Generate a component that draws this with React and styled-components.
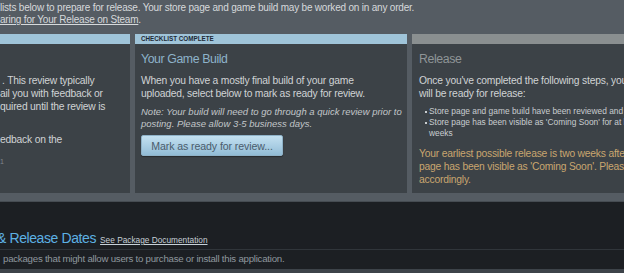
import styled, { createGlobalStyle } from 'styled-components';

const GlobalStyle = createGlobalStyle`
  html, body {
    margin: 0;
    padding: 0;
    background: #1c1f23;
    overflow: hidden;
  }
  body {
    font-family: 'Liberation Sans', Arial, sans-serif;
  }
`;

const Page = styled.div`
  width: 624px;
  height: 273px;
  overflow: hidden;
  display: flex;
  flex-direction: column;
`;

const Upper = styled.section`
  background: #555c63;
  padding: 2px 0 8px;
  border-bottom: 1px solid #464c52;
`;

const Intro = styled.p`
  margin: 0 0 8px;
  color: #d6d9db;
  font-size: 10px;
  letter-spacing: -0.2px;
  line-height: 12px;
  white-space: nowrap;

  a {
    color: #d6d9db;
    text-decoration: underline;
  }
`;

const Columns = styled.div`
  display: grid;
  grid-template-columns: 130px 272px 1fr;
  column-gap: 5px;
  margin-right: -40px;
`;

const Panel = styled.div`
  background: #3c4247;
  height: 159px;
  display: flex;
  flex-direction: column;
`;

const PanelHeader = styled.div`
  height: 10px;
  background: ${(p) => (p.$done ? '#9fc4d9' : '#8a8f90')};
  color: #1d2a36;
  font-size: 6.3px;
  font-weight: bold;
  line-height: 10px;
  padding-left: 6px;
  text-transform: uppercase;
`;

const PanelBody = styled.div`
  padding: 8px 7px 0 ${(p) => p.$left ?? 6}px;
  display: flex;
  flex-direction: column;
`;

const PanelTitle = styled.h3`
  margin: 0 0 8px;
  font-weight: normal;
  font-size: 12.3px;
  letter-spacing: -0.4px;
  line-height: 14px;
  color: ${(p) => (p.$muted ? '#8f9597' : '#8eb3ca')};
`;

const BodyText = styled.p`
  margin: 0 0 6px;
  color: ${(p) => (p.$warn ? '#c9a66f' : '#d0d3d5')};
  font-size: 10.3px;
  letter-spacing: -0.2px;
  line-height: 13px;
  white-space: nowrap;
`;

const Note = styled.p`
  margin: 0 0 6px;
  color: #c2c6c9;
  font-size: 9.5px;
  line-height: 11.6px;
  font-style: italic;
  white-space: nowrap;
`;

const Bullets = styled.ul`
  margin: 0 0 7px;
  padding: 0 0 0 6px;
  list-style: none;
  white-space: nowrap;

  li {
    position: relative;
    color: #c9cdd0;
    font-size: 8.4px;
    line-height: 11.2px;
    padding-left: 4px;
  }
  li::before {
    content: '';
    position: absolute;
    left: 0;
    top: 5px;
    width: 2px;
    height: 2px;
    background: #c9cdd0;
  }
`;

const FragLine = styled.div`
  color: #d0d3d5;
  font-size: 10.3px;
  letter-spacing: -0.2px;
  line-height: 13px;
  height: 13px;
  white-space: nowrap;
  padding-left: ${(p) => p.$indent ?? 0}px;
`;

const FragGap = styled.div`
  height: ${(p) => p.$h}px;
`;

const Tiny = styled.div`
  color: #80878c;
  font-size: 7px;
  line-height: 8px;
  margin-top: 12px;
`;

const Button = styled.button`
  align-self: flex-start;
  width: 142px;
  height: 21px;
  border: 1px solid #8fb2c8;
  border-radius: 2px;
  background: linear-gradient(to bottom, #c3e0f0 0%, #a9cde3 55%, #92bcd6 100%);
  box-shadow: 0 1px 1px rgba(0, 0, 0, 0.35);
  color: #4a5c6c;
  font-family: inherit;
  font-size: 10.6px;
  letter-spacing: -0.1px;
  padding: 0;
  cursor: pointer;
`;

const Lower = styled.section`
  flex: 1;
  background: #1c1f23;
  padding-top: 28px;
  display: flex;
  flex-direction: column;
`;

const HeadingRow = styled.div`
  display: flex;
  align-items: baseline;
  gap: 4px;
  padding-bottom: 2px;
  border-bottom: 1px solid #30353a;
`;

const Heading = styled.h2`
  margin: 0 0 0 -3px;
  font-weight: normal;
  font-size: 14px;
  letter-spacing: -0.4px;
  line-height: 17px;
  color: #5db1e4;
  white-space: nowrap;
`;

const DocLink = styled.a`
  color: #c7d1d8;
  font-size: 8.3px;
  text-decoration: underline;
  white-space: nowrap;
`;

const LowerText = styled.p`
  margin: 3px 0 0 3px;
  color: #8e979e;
  font-size: 9.7px;
  letter-spacing: -0.25px;
  line-height: 12px;
  white-space: nowrap;
`;

const Footer = styled.div`
  margin-top: auto;
  height: 4px;
  background: #3d4349;
`;

export default function App() {
  return (
    <Page>
      <GlobalStyle />
      <Upper>
        <Intro>
          lists below to prepare for release. Your store page and game build may be worked on in any order.
          <br />
          <a href="#">aring for Your Release on Steam</a>.
        </Intro>
        <Columns>
          <Panel>
            <PanelHeader $done />
            <PanelBody $left={0}>
              <FragGap $h={22} />
              <FragLine $indent={2}>. This review typically</FragLine>
              <FragLine>ail you with feedback or</FragLine>
              <FragLine>quired until the review is</FragLine>
              <FragGap $h={20} />
              <FragLine>edback on the</FragLine>
              <Tiny>1</Tiny>
            </PanelBody>
          </Panel>
          <Panel>
            <PanelHeader $done>Checklist Complete</PanelHeader>
            <PanelBody>
              <PanelTitle>Your Game Build</PanelTitle>
              <BodyText>
                When you have a mostly final build of your game
                <br />
                uploaded, select below to mark as ready for review.
              </BodyText>
              <Note>
                Note: Your build will need to go through a quick review prior to
                <br />
                posting. Please allow 3-5 business days.
              </Note>
              <Button>Mark as ready for review...</Button>
            </PanelBody>
          </Panel>
          <Panel>
            <PanelHeader />
            <PanelBody $left={7}>
              <PanelTitle $muted>Release</PanelTitle>
              <BodyText>
                Once you've completed the following steps, your game
                <br />
                will be ready for release:
              </BodyText>
              <Bullets>
                <li>Store page and game build have been reviewed and approved</li>
                <li>
                  Store page has been visible as 'Coming Soon' for at least two
                  <br />
                  weeks
                </li>
              </Bullets>
              <BodyText $warn>
                Your earliest possible release is two weeks after your store
                <br />
                page has been visible as 'Coming Soon'. Please plan
                <br />
                accordingly.
              </BodyText>
            </PanelBody>
          </Panel>
        </Columns>
      </Upper>
      <Lower>
        <HeadingRow>
          <Heading>&amp; Release Dates</Heading>
          <DocLink href="#">See Package Documentation</DocLink>
        </HeadingRow>
        <LowerText>packages that might allow users to purchase or install this application.</LowerText>
        <Footer />
      </Lower>
    </Page>
  );
}
